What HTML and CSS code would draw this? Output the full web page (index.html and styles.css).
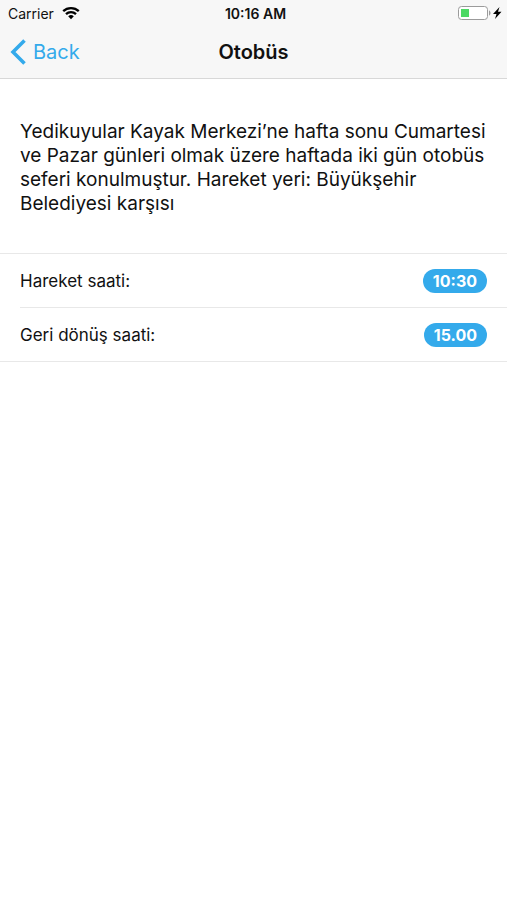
FILE: index.html
```
<!DOCTYPE html>
<html lang="tr">
<head>
  <meta charset="UTF-8">
  <meta name="viewport" content="width=device-width, initial-scale=1">
  <title>Otobüs</title>
  <link rel="stylesheet" href="styles.css">
</head>
<body>

<header class="header">
  <div class="status">
    <div class="status-left">
      <span>Carrier</span>
      <svg class="wifi" viewBox="0 0 18 14" aria-hidden="true">
        <path d="M1.2 5.2a11.2 11.2 0 0 1 15.6 0M4 8.2a7.2 7.2 0 0 1 10 0" fill="none" stroke="#000" stroke-width="2.3"/>
        <path d="M9 13.2L6.2 10.3a4 4 0 0 1 5.6 0z"/>
      </svg>
    </div>
    <span class="clock">10:16 AM</span>
    <div class="status-right">
      <svg class="battery" viewBox="0 0 46 16" aria-hidden="true">
        <rect x="1.5" y="1.5" width="29" height="13" rx="3" fill="#fff" stroke="#9b9b9b"/>
        <rect x="4" y="4" width="8" height="8" fill="#4cd964"/>
        <path d="M32 5.500c2 .5 2 4.500 0 5z" fill="#9b9b9b"/>
        <path d="M42.500 2L36 9h3.500L38 14l6.500-7.200H41z"/>
      </svg>
    </div>
  </div>
  <nav class="nav">
    <a href="#" class="back">
      <svg class="chevron" viewBox="0 0 16 26" aria-hidden="true">
        <path d="M14.500 1.500L3 13l11.500 11.500" fill="none" stroke="currentColor" stroke-width="3.600"/>
      </svg>
      <span>Back</span>
    </a>
    <h1 class="title">Otobüs</h1>
  </nav>
</header>

<main>
  <p class="info">Yedikuyular Kayak Merkezi’ne hafta sonu Cumartesi ve Pazar günleri olmak üzere haftada iki gün otobüs seferi konulmuştur. Hareket yeri: Büyükşehir Belediyesi karşısı</p>
  <ul class="list">
    <li class="row">
      <span>Hareket saati:</span>
      <span class="badge">10:30</span>
    </li>
    <li class="row">
      <span>Geri dönüş saati:</span>
      <span class="badge">15.00</span>
    </li>
  </ul>
</main>

</body>
</html>
```
FILE: styles.css
```
* {
  margin: 0;
  padding: 0;
  box-sizing: border-box;
}

body {
  background-color: #fff;
  color: #111;
  font-family: Inter, "Liberation Sans", sans-serif;
}

.header {
  background-color: #f7f7f7;
  border-bottom: 1px solid #d8d8d8;
}

/* carrier / clock / battery */
.status {
  display: grid;
  grid-template-columns: 1fr auto 1fr;
  align-items: center;
  height: 26px;
  padding: 0 4px 0 8px;
  font-size: 14px;
}

.status-left,
.status-right {
  display: flex;
  align-items: center;
  gap: 8px;
}

.status-right {
  justify-content: flex-end;
}

.clock {
  font-weight: 600;
}

.wifi {
  width: 18px;
  height: 14px;
}

.battery {
  width: 46px;
  height: 16px;
}

.nav {
  display: grid;
  grid-template-columns: 1fr auto 1fr;
  align-items: center;
  height: 52px;
  padding: 0 10px;
}

.back {
  display: flex;
  align-items: center;
  gap: 7px;
  color: #34aaeb;
  font-size: 20px;
  text-decoration: none;
}

.chevron {
  width: 16px;
  height: 26px;
}

.title {
  font-size: 20px;
  font-weight: 600;
}

.info {
  padding: 41px 20px 37px;
  font-size: 19px;
  line-height: 24px;
}

.list {
  list-style: none;
  border-top: 1px solid #e8e8e8;
  border-bottom: 1px solid #e8e8e8;
}

.row {
  display: flex;
  align-items: center;
  justify-content: space-between;
  height: 53px;
  margin-left: 20px;
  padding-right: 20px;
  font-size: 17px;
}

.row + .row {
  height: 54px;
  border-top: 1px solid #e8e8e8;
}

.badge {
  padding: 0 10px;
  border-radius: 12px;
  background-color: #34aaeb;
  color: #fff;
  font-size: 16px;
  font-weight: 700;
  line-height: 24px;
}
```
